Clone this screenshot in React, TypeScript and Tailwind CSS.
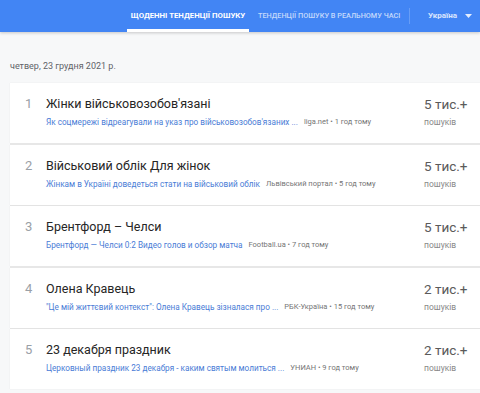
const rows = [
  {
    n: 1,
    title: "Жінки військовозобов'язані",
    link: "Як соцмережі відреагували на указ про військовозобов'язаних ...",
    source: "liga.net • 1 год тому",
    count: "5 тис.+",
  },
  {
    n: 2,
    title: "Військовий облік Для жінок",
    link: "Жінкам в Україні доведеться стати на військовий облік",
    source: "Львівський портал • 5 год тому",
    count: "5 тис.+",
  },
  {
    n: 3,
    title: "Брентфорд – Челси",
    link: "Брентфорд — Челси 0:2 Видео голов и обзор матча",
    source: "Football.ua • 7 год тому",
    count: "5 тис.+",
  },
  {
    n: 4,
    title: "Олена Кравець",
    link: "\"Це мій життєвий контекст\": Олена Кравець зізналася про ...",
    source: "РБК-Україна • 15 год тому",
    count: "2 тис.+",
  },
  {
    n: 5,
    title: "23 декабря праздник",
    link: "Церковный праздник 23 декабря - каким святым молиться ...",
    source: "УНИАН • 9 год тому",
    count: "2 тис.+",
  },
];

export default function App() {
  return (
    <div className="h-[393px] w-[480px] overflow-hidden bg-[#f7f8f9] font-['Roboto',sans-serif]">
      <header className="flex h-[32px] items-stretch whitespace-nowrap bg-[#4285f4] shadow-[0_1px_3px_rgba(0,0,0,0.2)]">
        <div className="w-[127px]" />
        <div className="flex w-[122px] items-center justify-center border-b-[3px] border-white pt-[3px] text-[7.8px] font-bold text-white">
          ЩОДЕННІ ТЕНДЕНЦІЇ ПОШУКУ
        </div>
        <div className="flex w-[160px] items-center pl-[9px] pt-[1px] text-[7.3px] font-medium text-white/70">
          ТЕНДЕНЦІЇ ПОШУКУ В РЕАЛЬНОМУ ЧАСІ
        </div>
        <div className="my-[8px] w-px bg-white/20" />
        <div className="flex flex-1 items-center gap-[8px] pl-[18px] text-[8px] font-bold text-white/80">
          Україна
          <svg width="7" height="4" viewBox="0 0 7 4">
            <path d="M0 0h7L3.5 4z" fill="rgba(255,255,255,0.85)" />
          </svg>
        </div>
      </header>

      <div className="px-[10px] pt-[28px]">
        <div className="mb-[11px] text-[9px] leading-[12px] text-[#5f6368]">четвер, 23 грудня 2021 р.</div>
        <div className="mr-[-10px] flex flex-col gap-[1.5px] bg-[#ebebeb]">
          {rows.map((r) => (
            <div key={r.n} className="flex h-[60px] items-start bg-white pt-[12px] shadow-[0_0_1px_rgba(0,0,0,0.1)]">
              <div className="w-[36px] pl-[15px] text-[13px] leading-[18px] text-[#9aa0a6]">{r.n}</div>
              <div className="flex-1">
                <div className="text-[12.5px] leading-[18px] text-[#262626]">{r.title}</div>
                <div className="mt-[3px] flex items-center gap-[6px] whitespace-nowrap leading-[12px]">
                  <span className="text-[8.2px] text-[#4a7cd6]">{r.link}</span>
                  <span className="text-[7.5px] text-[#757575]">{r.source}</span>
                </div>
              </div>
              <div className="w-[56px]">
                <div className="text-[13.5px] leading-[18px] text-[#5a5a5a]">{r.count}</div>
                <div className="mt-[3px] text-[8.5px] leading-[12px] text-[#888]">пошуків</div>
              </div>
            </div>
          ))}
        </div>
      </div>
    </div>
  );
}
